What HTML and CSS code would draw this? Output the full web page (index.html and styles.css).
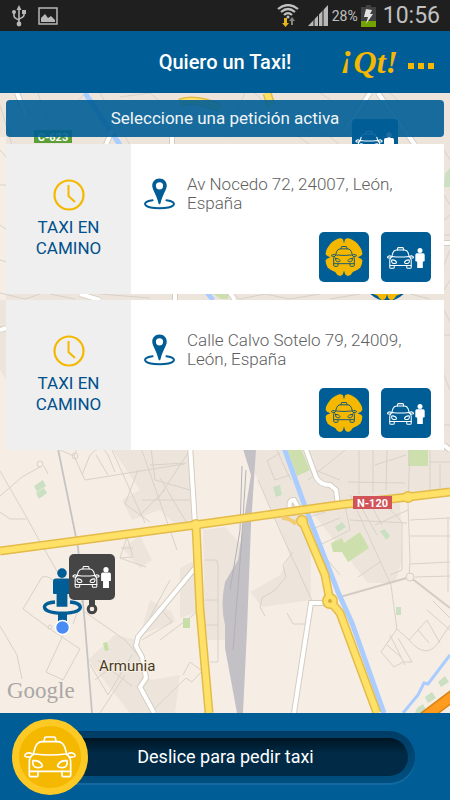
FILE: index.html
```
<!DOCTYPE html>
<html lang="es">
<head>
<meta charset="utf-8">
<meta name="viewport" content="width=device-width, initial-scale=1">
<title>Quiero un Taxi!</title>
<link rel="stylesheet" href="styles.css">
</head>
<body>
<svg class="defs" aria-hidden="true">
  <defs>
    <symbol id="taxi" viewBox="0 0 156 126">
      <g fill="none" stroke="currentColor" stroke-linejoin="round" stroke-linecap="round">
        <path d="M60 17 62 6Q62 3 66 3H90Q94 3 94 6L96 17"/>
        <path d="M27 56 34 33Q40 18 54 17H102Q116 18 122 33L129 56"/>
        <path d="M30 54Q78 60 126 54M27 56Q16 64 16 78V106H140V78Q140 64 129 56"/>
        <path d="M24 54Q20 50 11 51 2 54 3 60 5 64 20 63M132 54Q136 50 145 51 154 54 153 60 151 64 136 63"/>
        <path d="M27 74Q48 72 55 88 56 95 40 95 24 93 27 74ZM129 74Q108 72 101 88 100 95 116 95 132 93 129 74Z"/>
        <path d="M16 106V116Q16 122 22 122H36Q42 122 42 116V106M114 106V116Q114 122 120 122H134Q140 122 140 116V106"/>
      </g>
    </symbol>
    <symbol id="person" viewBox="0 0 30 64">
      <circle cx="15" cy="8" r="8" fill="currentColor"/>
      <path d="M5 17H25Q30 17 30 22V41Q30 43 27 43H24V64H6V43H3Q0 43 0 41V22Q0 17 5 17Z" fill="currentColor"/>
    </symbol>
    <symbol id="flower" viewBox="0 0 112 112">
      <path fill="#f5b800" d="M42 1Q48 0 53 4L56 16 59 4Q64 0 70 1 92 8 104 28 111 38 110 48 107 54 96 57 107 60 110 65 111 76 104 88 92 98 82 100 76 111 68 112 61 111 59 106L56 96 53 106Q51 111 44 112 36 111 30 100 20 98 8 88 1 76 2 65 5 60 16 57 5 54 2 48 1 38 8 28 20 8 42 1Z"/>
    </symbol>
    <symbol id="clock" viewBox="0 0 32 32">
      <circle cx="16" cy="16" r="14.5" fill="none" stroke="#f5b800" stroke-width="2.2"/>
      <path d="M15.500 6V17L22 23" fill="none" stroke="#f5b800" stroke-width="2"/>
    </symbol>
    <symbol id="place" viewBox="0 0 94 96">
      <path fill="#005d96" fill-rule="evenodd" d="M47 1C33 1 25 11 25 23 25 36 38 49 44 77Q47 82 50 77C56 49 69 36 69 23 69 11 61 1 47 1ZM47 12A11 11 0 1 1 47 34 11 11 0 1 1 47 12Z"/>
      <path fill="none" stroke="#005d96" stroke-width="6" stroke-linecap="round" d="M26 67C6 69 0 76 5 82 12 89 30 91 47 91S82 89 89 82C94 76 88 69 68 67"/>
    </symbol>
  </defs>
</svg>

<div class="status">
  <svg class="usb" viewBox="0 0 14 22"><g fill="none" stroke="#b8b8b8" stroke-width="1.6"><path d="M7 3V19M2 8V11Q2 13 7 15M12 7V10Q12 12 7 14"/></g><path fill="#b8b8b8" d="M7 0 9.500 5H4.500ZM10 5H14V9H10Z"/><circle cx="2" cy="7" r="2" fill="#b8b8b8"/><circle cx="7" cy="19" r="2.400" fill="#b8b8b8"/></svg>
  <svg class="photo" viewBox="0 0 20 18"><path fill="none" stroke="#b8b8b8" stroke-width="1.500" d="M1 1H19V17H1Z"/><path fill="#b8b8b8" d="M3 15V11L7 7 10 11 13 9 17 13V15Z"/></svg>
  <svg class="wifi" viewBox="0 0 22 24"><g fill="none" stroke="#c0c0c0" stroke-width="2.200"><path d="M1 5Q11-3 21 5M4 8Q11 2 18 8M7 11Q11 7 15 11"/></g><circle cx="11" cy="13" r="1.500" fill="#c0c0c0"/><path fill="#e5b51b" d="M7 14H10V19H12L8.500 23 5 19H7Z"/><path fill="#858585" d="M14 21V17H12L15 13 18 17H16V21Z"/></svg>
  <svg class="signal" viewBox="0 0 21 21"><path fill="#b8b8b8" d="M0 21 20 0V21Z"/><path stroke="#1f1f1f" stroke-width="1" d="M6 14V21M10.500 9V21M15 4V21"/></svg>
  <span class="percent">28%</span>
  <svg class="battery" viewBox="0 0 15 22"><path fill="#414141" d="M5 0H10V2H15V22H0V2H5Z"/><path fill="#72a300" d="M0 16H15V22H0Z"/><path fill="#e3e3e3" d="M5 4 11 5 9 9H12L5 19 7 12H3Z"/></svg>
  <time class="time">10:56</time>
</div>

<header class="header">
  <h1 class="title">Quiero un Taxi!</h1>
  <div class="tools">
    <span class="logo"><span class="raised">¡</span>Qt!</span>
    <button class="more" type="button" aria-label="Menú"><i></i><i></i><i></i></button>
  </div>
</header>

<main class="main">
  <svg class="map" viewBox="0 93 450 620" preserveAspectRatio="xMidYMin slice">
    <path fill="#f6eee5" d="M0 93H450V713H0Z"/>
    <g fill="#ede5dc">
      <path d="M0 93H450V449H265L258 480 245 449H0Z"/>
      <path d="M112 449H188L195 525 180 529 160 510 132 520 122 500 140 490Z"/>
      <path d="M265 449H450V490L400 500 402 560 395 583 368 583 310 510 311 600 262 607 250 592 280 575 290 555 280 530 258 480Z"/>
      <path d="M203 530 225 527 250 555 240 640 205 640Z"/>
      <path d="M180 568 196 560 197 612 180 618ZM88 660 115 635 137 640 150 680 180 675 175 713H130ZM140 635 150 600 172 612 175 622ZM122 548 140 536 152 560 140 568Z"/>
      <path fill="#f6eee5" d="M0 370 20 400 60 449H0ZM0 137H6V300H0ZM194 449H245L240 510 198 518Z"/>
    </g>
    <g fill="#ccdfac">
      <path d="M287 449H301L310 470 297 476ZM408 449H428V466H408ZM213 294H228V299H221ZM331 543 342 538 344 543 360 532 369 548 348 562 342 552 333 552Z"/>
      <path fill="#c5dfa5" d="M183 618H190V628H183ZM103 643 107 642 109 650 105 651Z"/>
      <path fill="#cbdfc2" d="M34 486 43 480 46 486 37 492ZM36 493 44 488 47 493 39 499ZM273 487 280 485 282 495 276 497ZM335 527 342 522 346 527 338 532ZM380 531 385 529 390 536 386 540ZM396 607H401V615H396ZM438 682 445 676 449 682 441 687ZM425 697 432 692 436 698 428 703ZM417 708 423 704 426 710 421 713H415ZM445 174 450 168V187H444Z"/>
    </g>
    <g fill="none" stroke="#d8d2c8" stroke-width="1">
      <path d="M0 471 27 518 39 540 68 590M0 496 22 477 40 467M44 466 48 474M0 512 10 519H26M0 626 17 655 22 679M60 450 74 456 85 480 184 464M74 456 80 442M82 475 90 455Q102 442 108 455L115 472M96 455 108 475"/>
      <path d="M112 450 145 523M140 445 177 550M150 465 186 463M160 478 188 525M150 440 155 480 190 490M157 500 190 450M140 515 165 490M142 500H190M138 470 125 504 150 522"/>
      <path d="M23 609 42 577Q46 575 53 580L62 583M23 609 50 629 80 649 63 680 46 672 64 633M73 624 85 592M85 612 125 640 142 660M120 558 127 537 133 557ZM121 548H133M120 558 146 567"/>
      <path d="M90 664 108 695 132 655M98 660 132 686M95 680 120 660M100 713 125 675M183 675 190 662 202 671 192 682 186 678 150 713M142 640 172 622 160 608M150 617 170 580M160 640 197 612M205 560H217Q219 566 218 575V662H210M205 600H218M205 625H218"/>
      <path d="M258 480 281 533 313 603M276 448 286 470 291 480M267 461 275 480 290 475M267 461 280 453M293 523 302 512 341 500M295 520 340 575M300 520 325 512M310 530 340 518M320 545 350 530"/>
      <path d="M359 449V495M373 449V493M387 449 386 490M410 449 408 503 410 560 409 577M430 449V492M440 465V488M375 465 406 455M348 482 405 483M308 480 345 450M315 470 340 480M360 505 377 535M370 503 382 525M350 520 407 523M350 495 391 585 397 630M384 503 402 522 402 570 390 575M410 536H450M410 564 450 562M448 517V592M410 520 450 518M415 577 450 576M375 525 408 510M358 577 380 562M407 449 450 449M430 462H450M345 505 350 530"/>
      <path d="M397 629 409 640Q426 660 438 643L450 625M397 629 381 652 394 667 403 662 412 662 398 638M390 635 405 665M387 645 402 658M409 640 427 620 440 643M418 630 429 643M427 610 450 630M433 601 450 618M260 607 262 598 275 590 286 577 283 565 293 552M287 613 293 624H305M260 607 265 616"/>
      <path d="M0 105 12 145M38 93 55 145M70 110 85 93M100 93 130 145M120 97 150 93 170 110M225 137 245 93M255 93 290 130 310 145M265 115 330 137M285 100 340 145M320 93 400 145M390 93 430 130M0 150 7 158V185H0M0 225 7 230M0 260 7 262M0 293 25 299 40 294M50 294 75 299M100 294 150 298M225 294 240 299 265 294 290 299 320 294M330 299 360 294M410 294 430 299"/>
      <path d="M444 150 450 160M444 195 450 205M444 220 450 215M444 235H450M444 265 450 250M444 290 450 280M444 310 450 322M444 335H450M444 375 450 390M444 425H450"/>
      <circle cx="40" cy="464" r="3"/><circle cx="75" cy="456" r="3"/><circle cx="50" cy="627" r="2"/>
    </g>
    <path d="M340 597 410 577 450 608" fill="none" stroke="#d2ccc3" stroke-width="2"/>
    <circle cx="410" cy="577" r="4" fill="#f6eee5" stroke="#d5cfc5"/>
    <path d="M58 449 78 547 85 625 92 713" fill="none" stroke="#c6c4c3" stroke-width="1.800"/>
    <path fill="#c3c1c6" d="M243 449H256L251 525 247 630 243 713H237L225 648V582L238 560 243 525 251 475Z"/>
    <path d="M242 466 240 530 230 590M246 470 241 550 233 650" fill="none" stroke="#b3b1b6" stroke-width="1"/>
    <path fill="#c3c1c6" d="M225 582Q220 605 225 625Z"/>
    <g fill="none" stroke="#aaccff" stroke-width="5"><path d="M85 93 100 115 120 145M205 290 213 300M283 445 307 512 338 592 352 623 384 713"/><path stroke-width="3" d="M450 655 428 684 424 683 418 695 403 713"/></g>
    <path fill="none" stroke="#d3cdc2" stroke-width="6" d="M190 445 195 525M305 447 316 477Q320 485 330 485L336 490 338 505M195 568 138 637 136 646 142 657 146 678 140 687 154 713M326 603H311L294 713M17 93 26 115M106 145 112 130M172 137V145M345 130 370 93M378 93 415 145M80 294 100 300M175 294V300M0 330 6 328M444 445 450 450M444 243H450M228 290 235 300M290 509Q288 500 294 500L299 509"/>
    <path fill="none" stroke="#fff" stroke-width="4" d="M190 445 195 525M305 447 316 477Q320 485 330 485L336 490 338 505M195 568 138 637 136 646 142 657 146 678 140 687 154 713M326 603H311L294 713M17 93 26 115M106 145 112 130M172 137V145M345 130 370 93M378 93 415 145M80 294 100 300M175 294V300M0 330 6 328M444 445 450 450M444 243H450M228 290 235 300M290 509Q288 500 294 500L299 509"/>
    <path fill="none" stroke="#e3bb4a" stroke-width="9" d="M0 551 195 525 338 505 408 497 450 492M196 525 200 610 209 713M302 520 325 575 330 601 340 613 377 713M267 93 271 105M180 103Q195 97 220 108"/>
    <circle cx="330" cy="601" r="8" fill="#e3bb4a"/><circle cx="302" cy="521" r="6" fill="#e3bb4a"/><circle cx="408" cy="497" r="6" fill="#e3bb4a"/><circle cx="196" cy="525" r="6" fill="#e3bb4a"/>
    <path fill="none" stroke="#ffe168" stroke-width="6" d="M0 551 195 525 338 505 408 497 450 492M196 525 200 610 209 713M302 520 325 575 330 601 340 613 377 713M267 93 271 105M180 103Q195 97 220 108"/>
    <circle cx="330" cy="601" r="6.500" fill="#ffe168"/><circle cx="302" cy="521" r="4.500" fill="#ffe168"/><circle cx="196" cy="525" r="4.500" fill="#ffe168"/><circle cx="408" cy="497" r="4.500" fill="#ffe168"/><circle cx="330" cy="601" r="2" fill="#d8ad3d"/>
    <path d="M282 518Q290 518 296 524" fill="none" stroke="#f3cb72" stroke-width="4"/>
    <path d="M422 719 455 694" stroke="#d98210" stroke-width="12"/><path d="M422 719 455 694" stroke="#ff9c1f" stroke-width="9"/>

    <path fill="#5c9e38" d="M34 130H72V143H34Z"/>
    <text class="shield" x="53" y="141" text-anchor="middle">C-623</text>
    <path fill="#d05458" d="M353 496H392V509H353Z"/>
    <text class="shield" x="372.500" y="507" text-anchor="middle">N-120</text>
    <text class="town" x="99" y="671">Armunia</text>
    <text class="google" x="7" y="698">Google</text>

    <rect x="352" y="119" width="46" height="46" rx="4" fill="#005d96"/>
    <use href="#taxi" class="pin-taxi" x="355" y="131" width="28" height="22"/>
    <use href="#person" class="pin-taxi" x="384" y="132" width="10" height="22"/>
    <circle cx="387" cy="278" r="23" fill="#005d96"/><use href="#flower" x="367" y="260" width="40" height="40"/>

    <path fill="none" stroke="#005d96" stroke-width="3.500" d="M55 602C43 603 42 608 48 611 55 614 70 614 77 611 83 608 81 603 70 602"/>
    <use href="#person" class="me" x="53" y="567" width="18" height="41"/>
    <path fill="#005d96" d="M58 612H67V622H58Z"/>
    <circle cx="62.500" cy="627.500" r="7" fill="#4a8bf5" stroke="#fff" stroke-width="1.500"/>
    <rect x="69" y="554" width="46" height="46" rx="5" fill="#454545"/>
    <path d="M89 599H95V605H89Z" fill="#454545"/><circle cx="92" cy="609" r="3.800" fill="#f6eee5" stroke="#454545" stroke-width="3"/>
    <use href="#taxi" class="pin-taxi" x="72" y="566" width="28" height="22"/>
    <use href="#person" class="pin-taxi" x="101" y="567" width="10" height="21"/>
  </svg>

  <h2 class="banner">Seleccione una petición activa</h2>
  <ul class="requests">
    <li class="card">
      <div class="state"><svg class="clock"><use href="#clock"/></svg><span>TAXI EN CAMINO</span></div>
      <div class="detail">
        <div class="place"><svg class="place-icon"><use href="#place"/></svg><p class="address">Av Nocedo 72, 24007, León, España</p></div>
        <div class="actions">
          <button class="action" type="button" aria-label="Taxi"><svg viewBox="0 0 50 50"><use href="#flower" x="6" y="6" width="38" height="38"/><use href="#taxi" class="dark" x="12" y="14" width="26" height="21"/></svg></button>
          <button class="action" type="button" aria-label="Taxi y pasajero"><svg viewBox="0 0 50 50"><use href="#taxi" x="6" y="15" width="27" height="22"/><use href="#person" x="34" y="16" width="10" height="20"/></svg></button>
        </div>
      </div>
    </li>
    <li class="card">
      <div class="state"><svg class="clock"><use href="#clock"/></svg><span>TAXI EN CAMINO</span></div>
      <div class="detail">
        <div class="place"><svg class="place-icon"><use href="#place"/></svg><p class="address">Calle Calvo Sotelo 79, 24009, León, España</p></div>
        <div class="actions">
          <button class="action" type="button" aria-label="Taxi"><svg viewBox="0 0 50 50"><use href="#flower" x="6" y="6" width="38" height="38"/><use href="#taxi" class="dark" x="12" y="14" width="26" height="21"/></svg></button>
          <button class="action" type="button" aria-label="Taxi y pasajero"><svg viewBox="0 0 50 50"><use href="#taxi" x="6" y="15" width="27" height="22"/><use href="#person" x="34" y="16" width="10" height="20"/></svg></button>
        </div>
      </div>
    </li>
  </ul>
</main>

<footer class="footer">
  <button class="knob" type="button" aria-label="Pedir taxi"><svg class="knob-taxi"><use href="#taxi"/></svg></button>
  <div class="track"><div class="groove">Deslice para pedir taxi</div></div>
</footer>
</body>
</html>
```

FILE: styles.css
```
* {
  box-sizing: border-box;
}

body {
  margin: 0;
  min-height: 100vh;
  display: flex;
  flex-direction: column;
  font-family: Roboto, "Liberation Sans", sans-serif;
  background: #005d96;
}

button {
  border: 0;
  padding: 0;
  cursor: pointer;
}

.defs {
  position: absolute;
  width: 0;
  height: 0;
}

/* status bar */
.status {
  height: 31px;
  padding: 0 10px 0 12px;
  display: flex;
  align-items: center;
  background: #1f1f1f;
  color: #c0c0c0;
}

.usb {
  width: 14px;
  height: 22px;
}

.photo {
  width: 20px;
  height: 18px;
  margin-left: 12px;
}

.wifi {
  width: 22px;
  height: 24px;
  margin-left: auto;
}

.signal {
  width: 21px;
  height: 21px;
  margin: 0 3px 0 9px;
}

.percent {
  font-size: 14px;
}

.battery {
  width: 15px;
  height: 22px;
  margin: 0 7px 0 3px;
}

.time {
  font-size: 23px;
}

/* header */
.header {
  height: 62px;
  padding: 0 16px;
  display: grid;
  grid-template-columns: 1fr auto 1fr;
  align-items: center;
}

.title {
  grid-column: 2;
  margin: 0;
  font-size: 20px;
  font-weight: 500;
  color: #fff;
}

.tools {
  display: flex;
  justify-content: flex-end;
  align-items: center;
  gap: 10px;
}

.logo {
  font: italic bold 32px/40px "Liberation Serif", serif;
  color: #f5b800;
}

.raised {
  vertical-align: 7px;
  line-height: 1px;
}

.more {
  display: flex;
  gap: 4px;
  padding: 8px 0 0;
  background: none;
}

.more i {
  width: 6px;
  height: 6px;
  background: #f5b800;
}

/* map and requests */
.main {
  flex: 1;
  position: relative;
  padding: 7px 6px;
  background: #f6eee5;
}

.map {
  position: absolute;
  inset: 0;
  width: 100%;
  height: 100%;
}

.shield {
  font: bold 11px Roboto, sans-serif;
  fill: #fff;
}

.town {
  font: 15px Roboto, sans-serif;
  fill: #4a3b22;
  stroke: #f6eee5;
  stroke-width: 2;
  paint-order: stroke;
}

.google {
  font: 23px "Liberation Serif", serif;
  fill: #aaa7a4;
}

.pin-taxi {
  color: #fff;
  stroke-width: 6;
}

.me {
  color: #005d96;
}

.banner {
  position: relative;
  margin: 0 0 7px;
  border-radius: 4px;
  background: rgba(0, 93, 150, 0.9);
  color: #f0f5f8;
  font-size: 17px;
  font-weight: 400;
  line-height: 37px;
  text-align: center;
}

.requests {
  position: relative;
  margin: 0;
  padding: 0;
  list-style: none;
  display: grid;
  gap: 6px;
}

.card {
  min-height: 150px;
  display: grid;
  grid-template-columns: 125px 1fr;
  background: #fff;
}

.state {
  padding: 0 28px;
  display: flex;
  flex-direction: column;
  align-items: center;
  justify-content: center;
  gap: 6px;
  background: #efefef;
  color: #00508c;
  font-size: 17px;
  line-height: 21px;
  text-align: center;
}

.clock {
  width: 32px;
  height: 32px;
}

.detail {
  padding: 31px 13px 12px;
  display: flex;
  flex-direction: column;
  justify-content: space-between;
}

.place {
  display: flex;
  gap: 12px;
}

.place-icon {
  width: 31px;
  height: 32px;
  margin-top: 3px;
  flex: none;
}

.address {
  margin: 0;
  color: #606060;
  font-size: 17px;
  font-weight: 300;
  line-height: 19px;
}

.actions {
  display: flex;
  justify-content: flex-end;
  gap: 12px;
}

.action {
  width: 50px;
  height: 50px;
  border-radius: 5px;
  background: #005d96;
  color: #fff;
  stroke-width: 6;
}

.action svg {
  display: block;
}

.dark {
  color: #1d5c74;
}

/* slide-to-order bar */
.footer {
  height: 87px;
  padding: 0 35px 0 12px;
  display: flex;
  align-items: center;
}

.knob {
  position: relative;
  width: 76px;
  height: 76px;
  display: grid;
  place-items: center;
  border: 7px solid #fdca25;
  border-radius: 50%;
  background: #f5b800;
  color: #fff;
  stroke-width: 5;
}

.knob-taxi {
  width: 52px;
  height: 42px;
}

.track {
  flex: 1;
  margin-left: -40px;
  padding: 7px;
  border-radius: 27px;
  background: linear-gradient(#003d66, #004f80);
  box-shadow: 0 2px 0 #146aa0;
}

.groove {
  padding-right: 12px;
  border-radius: 19px;
  background: linear-gradient(#001523, #002a45 40%);
  color: #fff;
  font-size: 18px;
  line-height: 38px;
  text-align: center;
}
```
